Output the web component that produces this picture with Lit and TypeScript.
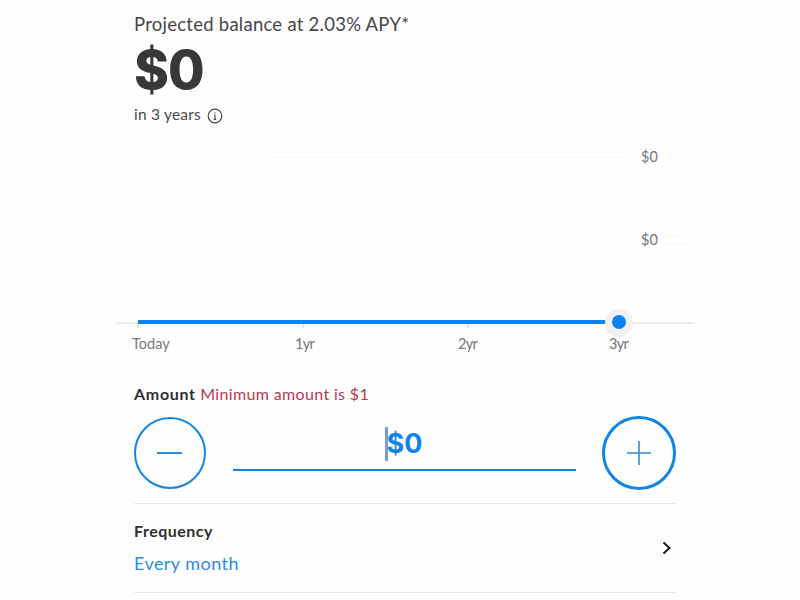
import { LitElement, html, css, svg } from "lit";
import { customElement } from "lit/decorators.js";

@customElement("app-root")
export class AppRoot extends LitElement {
  static styles = css`
    :host {
      display: block;
      width: 800px;
      height: 600px;
      overflow: hidden;
      background: #fefefe;
      font-family: "Lato", "Liberation Sans", sans-serif;
      color: #333336;
    }
    .head {
      padding: 13px 0 0 134px;
      display: flex;
      flex-direction: column;
    }
    .label { font-size: 18.5px; line-height: 22px; letter-spacing: 0.25px; color: #46464a; }
    .balance {
      font-family: "Inter", "Liberation Sans", sans-serif;
      font-size: 53px;
      line-height: 62px;
      font-weight: 800;
      letter-spacing: -1px;
      margin-top: 4px;
      color: #38383b;
    }
    .years {
      display: flex;
      align-items: center;
      gap: 6px;
      font-size: 15.5px;
      line-height: 20px;
      letter-spacing: 0.2px;
      color: #4a4a4e;
      margin-top: 3px;
    }
    .years svg { display: block; margin-top: 3px; }
    .chart { display: block; margin-top: 14px; }
    .chart text { font-family: "Lato", "Liberation Sans", sans-serif; font-size: 14.5px; fill: #77777b; }
    .chart text.yr { letter-spacing: -0.7px; }
    .form { padding: 14px 123px 0 134px; }
    .amount-label { font-size: 16px; line-height: 20px; letter-spacing: 0.35px; }
    .amount-label b { font-weight: 700; color: #2f2f32; letter-spacing: 0.7px; }
    .amount-label span { color: #b8394f; }
    .stepper {
      display: flex;
      align-items: center;
      margin-top: 12px;
      padding-bottom: 13px;
      border-bottom: 1px solid #e6e6ea;
    }
    .btn {
      flex: none;
      box-sizing: border-box;
      width: 72px;
      height: 72px;
      border: 2px solid #1485e4;
      border-radius: 50%;
      display: flex;
      align-items: center;
      justify-content: center;
      background: none;
      padding: 0;
    }
    .btn.plus { width: 74px; height: 74px; border-width: 3px; margin: 0 1px 0 26px; }
    .btn svg { display: block; }
    .field {
      flex: 1;
      align-self: flex-start;
      margin-left: 27px;
      height: 55px;
      box-sizing: border-box;
      border-bottom: 2px solid #1580dc;
      display: flex;
      justify-content: center;
      align-items: flex-start;
    }
    .value {
      position: relative;
      font-family: "Inter", "Liberation Sans", sans-serif;
      font-size: 27px;
      font-weight: 700;
      line-height: 34px;
      color: #1283e6;
      margin-top: 11px;
    }
    .caret {
      position: absolute;
      left: -2px;
      top: 0;
      width: 3px;
      height: 34px;
      background: #7f9ad8;
    }
    .row {
      display: flex;
      align-items: center;
      justify-content: space-between;
      height: 88px;
      padding-right: 4px;
      border-bottom: 1px solid #e6e6ea;
    }
    .row-text { display: flex; flex-direction: column; gap: 12px; }
    .row-title { font-size: 16px; line-height: 18px; font-weight: 700; letter-spacing: 0.5px; color: #2f2f32; }
    .row-value { font-size: 18px; line-height: 22px; letter-spacing: 0.45px; color: #2c90e0; }
    .row svg { display: block; }
  `;

  render() {
    const blue = "#0a84f0";
    return html`
      <div class="head">
        <div class="label">Projected balance at 2.03% APY*</div>
        <div class="balance">$0</div>
        <div class="years">
          in 3 years
          <svg width="16" height="16" viewBox="0 0 16 16" fill="none" stroke="#4a4a4e" stroke-width="1.2">
            <circle cx="8" cy="8" r="6.8"></circle>
            <path d="M8 7.2v4M6.8 11.3h2.4M7 7.2h1"></path>
            <circle cx="8" cy="4.9" r="0.7" fill="#4a4a4e" stroke="none"></circle>
          </svg>
        </div>
      </div>
      <svg class="chart" width="800" height="232" viewBox="0 0 800 232">
        ${svg`
          <line x1="270" y1="19" x2="630" y2="19" stroke="#f6f6f7"></line>
          <line x1="300" y1="102" x2="632" y2="102" stroke="#f4f4f6"></line>
          <line x1="662" y1="106" x2="690" y2="106" stroke="#f5f5f6"></line>
          <line x1="662" y1="98" x2="684" y2="98" stroke="#f6f6f7"></line>
          <line x1="116" y1="185" x2="694" y2="185" stroke="#dcdadc"></line>
          <line x1="138" y1="184" x2="138" y2="190" stroke="#cfcfd2"></line>
          <line x1="303" y1="184" x2="303" y2="190" stroke="#cfcfd2"></line>
          <line x1="468" y1="184" x2="468" y2="190" stroke="#cfcfd2"></line>
          <text x="641" y="24">$0</text>
          <text x="641" y="107">$0</text>
          <text x="132" y="211">Today</text>
          <text class="yr" x="295" y="211">1yr</text>
          <text class="yr" x="458" y="211">2yr</text>
          <text class="yr" x="609" y="211">3yr</text>
          <line x1="138" y1="184" x2="619" y2="184" stroke="${blue}" stroke-width="4"></line>
          <circle cx="619" cy="185" r="14" fill="#f1f1f2"></circle>
          <circle cx="619" cy="184" r="7" fill="${blue}"></circle>
        `}
      </svg>
      <div class="form">
        <div class="amount-label"><b>Amount</b> <span>Minimum amount is $1</span></div>
        <div class="stepper">
          <button class="btn" aria-label="Decrease">
            <svg width="26" height="26" viewBox="0 0 26 26" stroke="#2a8ce0" stroke-width="2"><path d="M0 13h25"></path></svg>
          </button>
          <div class="field"><div class="value"><i class="caret"></i>$0</div></div>
          <button class="btn plus" aria-label="Increase">
            <svg width="24" height="24" viewBox="0 0 24 24" stroke="#2a8ce0" stroke-width="1.6"><path d="M0 12h24M12 0v24"></path></svg>
          </button>
        </div>
        <div class="row">
          <div class="row-text">
            <div class="row-title">Frequency</div>
            <div class="row-value">Every month</div>
          </div>
          <svg width="12" height="14" viewBox="0 0 12 14" fill="none" stroke="#1c1c1f" stroke-width="2"><path d="M2.5 1.5 8.5 7l-6 5.5"></path></svg>
        </div>
      </div>
    `;
  }
}
